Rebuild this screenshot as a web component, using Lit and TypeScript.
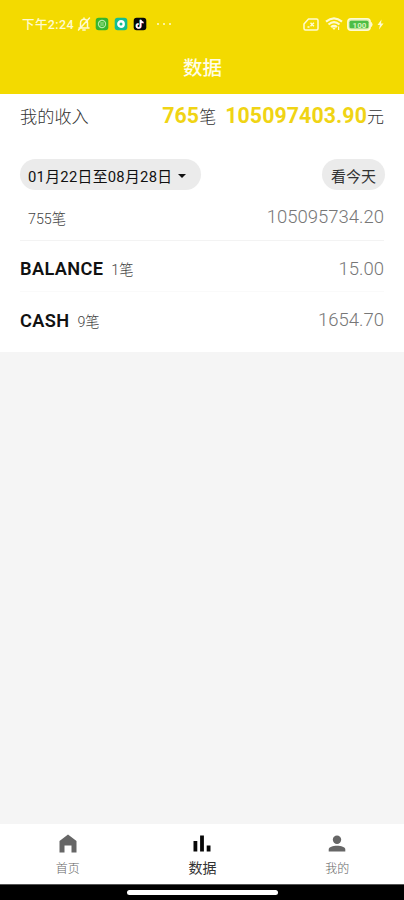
import { LitElement, html, css, svg } from "lit";
import { customElement } from "lit/decorators.js";

const muteIcon = svg`<svg width="14" height="16" viewBox="0 0 14 16" fill="none" stroke="#fffbd0" stroke-width="1.5" stroke-linecap="round">
  <path d="M2 12h10M3.500 12V7.200C3.500 4.700 5 3.300 7 3.300s3.500 1.400 3.500 3.900V12M7 2v1.300M5.800 14h2.400M12.500 2 1.500 14"/></svg>`;
const greenApp = svg`<svg width="14" height="14" viewBox="0 0 14 14"><rect x=".7" y=".7" width="12.600" height="12.600" rx="3" fill="#35b52d"/>
  <circle cx="7" cy="7" r="3.600" fill="none" stroke="#b5eaa5" stroke-width="1.200"/><path d="M5.200 6h3.600M5.200 8h3.600" stroke="#b5eaa5"/></svg>`;
const tealApp = svg`<svg width="14" height="14" viewBox="0 0 14 14"><rect x=".7" y=".7" width="12.600" height="12.600" rx="3" fill="#14bd91"/>
  <circle cx="7" cy="7" r="2.700" fill="none" stroke="#fff" stroke-width="2.400"/></svg>`;
const tiktokApp = svg`<svg width="14" height="14" viewBox="0 0 14 14"><rect x=".7" y=".7" width="12.600" height="12.600" rx="3" fill="#080808"/>
  <g fill="none" stroke-width="1.500"><path d="M7.200 2.700v6a2 2 0 1 1-2-2M7.200 2.700c.2 1.600 1.200 2.500 2.800 2.600" stroke="#35e4df"/>
  <path d="M8 3.100v6a2 2 0 1 1-2-2M8 3.100c.2 1.600 1.200 2.500 2.800 2.600" stroke="#f3446b"/>
  <path d="M7.600 2.900v6a2 2 0 1 1-2-2M7.600 2.900c.2 1.600 1.200 2.500 2.800 2.600" stroke="#fff"/></g></svg>`;
const simIcon = svg`<svg width="16" height="13" viewBox="0 0 16 13" fill="none" stroke="#fffbd0" stroke-width="1.500" stroke-linejoin="round">
  <path d="M5.500 1h8q1.500 0 1.500 1.500v8q0 1.500-1.500 1.500h-11Q1 12 1 10.500V6ZM7.500 4.700l3.400 3.600m0-3.600-3.400 3.600M4.500 9h2"/></svg>`;
const wifiIcon = svg`<svg width="18" height="14" viewBox="0 0 18 14" fill="none" stroke="#fffbd0" stroke-width="2.200">
  <path d="M1 4.600q8-6.600 16 0M3.500 7.500q5.500-4.600 11 0M6 10q3-2.400 6 0"/><path d="m9 13-2-2.400h4Z" fill="#fffbd0" stroke="none"/><path d="M13.600 9.500v3.500" stroke-width="1.200"/></svg>`;
const batteryIcon = svg`<svg width="26" height="13" viewBox="0 0 26 13"><rect x=".8" y=".8" width="22.400" height="11.400" rx="3.200" fill="#d9edaa" stroke="#fffbd0" stroke-width="1.500"/>
  <path d="M24.400 4.500q1.400 2 0 4Z" fill="#fffbd0" stroke="#fffbd0"/><rect x="2.500" y="2.800" width="19" height="7.400" rx="1.500" fill="#4dbd45"/>
  <text x="12.500" y="9.500" font-size="8" font-weight="700" text-anchor="middle" fill="#d9f3bd" font-family="Roboto, sans-serif">100</text></svg>`;
const boltIcon = svg`<svg width="7" height="11" viewBox="0 0 7 11"><path d="M4.500.5.5 6h2.400L2 10.500 6.500 4.600H4Z" fill="#fffbd0"/></svg>`;

const tabs = [
  { label: "首页", active: false, icon: svg`<path d="M10 .5 1.500 7v11.500h5V11.500h7v7h5V7Z"/>` },
  { label: "数据", active: true, icon: svg`<path d="M1.500 7h3.800v10.500H1.500zM8.100 1.500h3.800v16H8.100zM14.700 11.500h3.800v6h-3.800z"/>` },
  { label: "我的", active: false, icon: svg`<circle cx="10" cy="5.700" r="4.200"/><path d="M1.700 17.500v-2c0-5 16.600-5 16.600 0v2Z"/>` },
];

const rows = [
  { name: "", count: "755笔", amount: "105095734.20" },
  { name: "BALANCE", count: "1笔", amount: "15.00" },
  { name: "CASH", count: "9笔", amount: "1654.70" },
];

@customElement("app-root")
export class AppRoot extends LitElement {
  static styles = css`
    :host {
      display: flex;
      flex-direction: column;
      height: 900px;
      background: #f5f5f5;
      color: #333;
      font-family: Roboto, "Noto Sans CJK SC", sans-serif;
      white-space: nowrap;
    }
    * { box-sizing: border-box; }
    svg { display: block; flex: none; }
    header { height: 94px; background: #f3da00; color: #fffde6; }
    .status { height: 40px; padding: 8px 20px 0 22px; display: flex; align-items: center; }
    .time { font-size: 12.500px; font-weight: 500; letter-spacing: 0.4px; width: 55px; margin-top: -2px; color: #fffbd0; }
    .apps { display: flex; gap: 5px; margin-left: 4px; }
    .dots { display: flex; gap: 4px; margin-left: 10px; }
    .dots i { width: 2px; height: 2px; border-radius: 1px; background: #fffbd0; }
    .system { margin-left: auto; display: flex; align-items: center; }
    .wifi { margin: 0 4px 0 6px; }
    .bolt { margin-left: 4px; }
    .title { height: 52px; display: flex; align-items: center; justify-content: center; font-size: 19.500px; font-weight: 500; padding-left: 1px; }
    main { height: 258px; background: #fff; padding: 0 20px; }
    .income { height: 43px; display: flex; align-items: center; font-size: 17px; font-weight: 300; color: #333; }
    .income .label { margin-right: auto; font-size: 17.200px; }
    .income b { font-size: 21.300px; font-weight: 700; color: #f0d414; letter-spacing: 0.1px; }
    .income .total { margin-left: 9px; }
    .filters { height: 31px; margin-top: 22px; display: flex; justify-content: space-between; margin-right: -1px; }
    .pill { height: 31px; border-radius: 16px; background: #ebebeb; display: flex; align-items: center; font-size: 15px; color: #333; padding: 2px 9px 0 9px; }
    .date { width: 181px; padding: 2px 8px 0; font-size: 14.800px; letter-spacing: 0.3px; color: #111; }
    .caret { margin-left: 6px; border: 4px solid transparent; border-top-color: #111; border-bottom: 0; }
    .row { height: 51px; padding-top: 5px; display: flex; align-items: center; border-bottom: 1px solid #fafafa; }
    .row:first-child { padding-top: 4px; border-bottom-color: #f3f3f3; }
    .row:last-child { border-bottom: 0; }
    .name { font-size: 18.200px; font-weight: 600; color: #111; letter-spacing: 0.35px; }
    .count { margin-left: 8px; font-size: 14.300px; font-weight: 300; color: #444; }
    .amount { margin-left: auto; font-size: 18.500px; font-weight: 300; color: #777; }
    nav { margin-top: auto; height: 60px; background: #fff; display: grid; grid-template-columns: repeat(3, 1fr); }
    .tab { display: flex; flex-direction: column; align-items: center; padding: 10px 0 0 1px; font-size: 12px; font-weight: 300; line-height: 18px; color: #666; }
    .tab svg { fill: #666; margin-bottom: 6px; }
    .tab.active { font-size: 14px; font-weight: 400; color: #333; }
    .tab.active svg { fill: #080808; margin-bottom: 5px; }
    .gesture { height: 16px; background: #000; border-top: 1px solid #555; display: flex; justify-content: center; padding: 5px 0 0 1px; }
    .gesture i { width: 151px; height: 5px; border-radius: 3px; background: #fff; }
  `;

  render() {
    return html`
      <header>
        <div class="status">
          <span class="time">下午2:24</span>${muteIcon}
          <div class="apps">${greenApp}${tealApp}${tiktokApp}</div>
          <div class="dots"><i></i><i></i><i></i></div>
          <div class="system">${simIcon}<span class="wifi">${wifiIcon}</span>${batteryIcon}<span class="bolt">${boltIcon}</span></div>
        </div>
        <div class="title">数据</div>
      </header>
      <main>
        <div class="income">
          <span class="label">我的收入</span><b>765</b><span>笔</span><b class="total">105097403.90</b><span>元</span>
        </div>
        <div class="filters">
          <div class="pill date">01月22日至08月28日<i class="caret"></i></div>
          <div class="pill">看今天</div>
        </div>
        <div>
          ${rows.map((r) => html`<div class="row">
            ${r.name ? html`<span class="name">${r.name}</span>` : null}
            <span class="count">${r.count}</span><span class="amount">${r.amount}</span>
          </div>`)}
        </div>
      </main>
      <nav>
        ${tabs.map((t) => html`<div class="tab ${t.active ? "active" : ""}">
          <svg width="20" height="20" viewBox="0 0 20 20">${t.icon}</svg>${t.label}
        </div>`)}
      </nav>
      <div class="gesture"><i></i></div>
    `;
  }
}
